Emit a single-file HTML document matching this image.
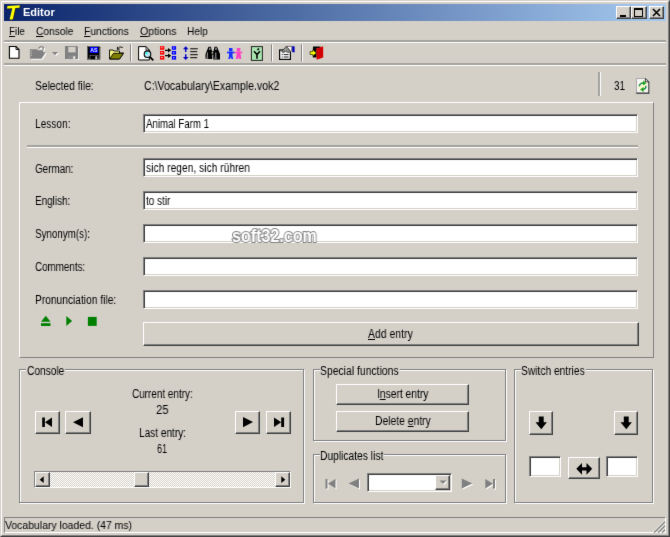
<!DOCTYPE html>
<html><head><meta charset="utf-8"><title>Editor</title>
<style>
*{box-sizing:border-box;margin:0;padding:0}
html,body{width:670px;height:537px;overflow:hidden;background:#d4d0c8}
body{filter:url(#soft);position:relative;font-family:"Liberation Sans",sans-serif;font-size:12px;color:#000}
.a{position:absolute}
.t{position:absolute;white-space:nowrap;transform-origin:0 0;display:inline-block;will-change:transform}
.frame{left:0;top:0;width:670px;height:537px;border:1px solid;border-color:#d4d0c8 #404040 #404040 #d4d0c8}
.frame2{left:1px;top:1px;width:668px;height:535px;border:1px solid;border-color:#fff #808080 #808080 #fff}
.title{left:4px;top:4px;width:662px;height:17px;background:linear-gradient(90deg,#0a246a 0%,#a6caf0 100%)}
.tb{position:absolute;top:6px;height:13px;background:#d4d0c8;border:1px solid;border-color:#fff #404040 #404040 #fff;box-shadow:inset -1px -1px 0 #808080}
.hsep{position:absolute;height:3px;border-top:2px solid #a5a39e;border-bottom:1px solid #fff}
.vsep{position:absolute;width:2px;border-left:1px solid #808080;border-right:1px solid #fff}
.inp{position:absolute;background:#fff;border:1px solid;border-color:#808080 #fff #fff #808080;box-shadow:inset 1px 1px 0 #404040,inset -1px -1px 0 #d4d0c8}
.btn{position:absolute;background:#d4d0c8;border:1px solid;border-color:#fff #404040 #404040 #fff;box-shadow:inset -1px -1px 0 #808080}
.grp{position:absolute;border:1px solid #808080;box-shadow:inset 1px 1px 0 #fff,1px 1px 0 #fff}
.gl{position:absolute;background:#d4d0c8;height:13px}
.panel{position:absolute;border:1px solid;border-color:#fff #808080 #808080 #fff}
u{text-decoration:underline;text-underline-offset:1px}
svg{position:absolute;overflow:visible}
</style></head><body>
<svg style="position:absolute;left:0;top:0" width="0" height="0"><defs><filter id="soft" x="0" y="0" width="100%" height="100%" color-interpolation-filters="sRGB"><feConvolveMatrix order="3" kernelMatrix="0.0052 0.0619 0.0052 0.0619 0.7314 0.0619 0.0052 0.0619 0.0052" divisor="1" edgeMode="duplicate" preserveAlpha="true"/></filter></defs></svg>
<div class="a frame"></div><div class="a frame2"></div>
<div class="a title"></div>
<!-- app icon -->
<svg style="left:0;top:0" width="30" height="22" viewBox="0 0 30 22"><path d="M7.4 5.9 L19.9 5.2 L19.4 7.7 L15.3 8 L12.9 19 Q11.2 20 9.6 19.2 L12.3 8.2 L7 8.6 Z" fill="#2a2a08" transform="translate(0.7,0.6)"/><path d="M7.4 5.9 L19.9 5.2 L19.4 7.7 L15.3 8 L12.9 19 Q11.2 20 9.6 19.2 L12.3 8.2 L7 8.6 Z" fill="#ffff00"/></svg>
<div class="tb" style="left:616px;width:15px"><div class="a" style="left:3px;top:8px;width:6px;height:2px;background:#000"></div></div>
<div class="tb" style="left:631px;width:16px"><div class="a" style="left:2px;top:1px;width:9px;height:9px;border:1px solid #000;border-top-width:2px"></div></div>
<div class="tb" style="left:649px;width:15px"><svg style="left:2px;top:1px" width="9" height="9" viewBox="0 0 9 9"><path d="M1 1 L8 8 M8 1 L1 8" stroke="#000" stroke-width="1.6"/></svg></div>
<div class="hsep" style="left:4px;top:40px;width:662px"></div>
<div class="hsep" style="left:4px;top:63px;width:662px"></div>
<svg style="left:0;top:42px" width="340" height="22" viewBox="0 42 340 22">
<!-- new -->
<path d="M9.4 46.5 H16 L19 49.5 V58.3 H9.4 Z" fill="#fff" stroke="#000" stroke-width="1.1"/>
<path d="M16 46.5 V49.5 H19" fill="none" stroke="#000" stroke-width="0.9"/>
<!-- open disabled -->
<g transform="translate(1,1)" fill="#fff" stroke="#fff"><path d="M30.3 49.5 H37 L38 50.5 H43 V52.5 H45.3 L41.5 58.5 H30.3 Z" stroke-width="0.5"/><path d="M38.5 48.5 Q41 45.5 43.5 47.5 L43 49.5" fill="none" stroke-width="1.2"/></g>
<path d="M30.3 49.5 H37 L38 50.5 H43 V52.5 H45.3 L41.5 58.5 H30.3 Z" fill="#808080" stroke="#808080" stroke-width="0.5"/>
<path d="M38.5 48.5 Q41 45.5 43.5 47.5 L43 49.5" fill="none" stroke="#808080" stroke-width="1.2"/>
<path d="M31.5 51 V57" stroke="#d4d0c8" stroke-width="0.8" stroke-dasharray="1 1"/>
<!-- dropdown arrow -->
<path d="M53 53 H59 L56 56.3 Z" fill="#fff"/>
<path d="M52 52 H58 L55 55.3 Z" fill="#808080"/>
<!-- save disabled -->
<rect x="66" y="47" width="13" height="13" fill="#fff"/>
<path d="M65 46 H77 L78.2 47.2 V59.2 H65 Z" fill="#808080"/>
<rect x="68.3" y="46.8" width="7.3" height="5.6" fill="#d4d0c8"/>
<rect x="68.3" y="55.5" width="7.5" height="3.7" fill="#8a8a8a"/>
<rect x="73.2" y="56.2" width="2" height="3" fill="#e8e6e0"/>
<!-- save as -->
<path d="M87 46 H99 L100.2 47.2 V59.5 H87 Z" fill="#000"/>
<path d="M87.5 46.5 H99 L99.7 47.5 V59 H87.5 Z" fill="none" stroke="#808080" stroke-width="0.8"/>
<rect x="89.8" y="47" width="8.3" height="6" fill="#0000ff"/>
<text x="90.3" y="52.3" font-family="Liberation Sans,sans-serif" font-size="6" font-weight="bold" fill="#e0e8ff" textLength="7.2" lengthAdjust="spacingAndGlyphs">AS</text>
<rect x="90" y="55.3" width="8" height="4.2" fill="#000" stroke="#808080" stroke-width="0.6"/>
<rect x="95.3" y="56.3" width="1.8" height="3" fill="#c0c0c0"/>
<!-- open folder -->
<path d="M109.5 50 H113 L114 51 H119.5 V53 H123.5 L119.5 59 H109.5 Z" fill="#f4f480" stroke="#000" stroke-width="0.9"/>
<path d="M109.7 59 L113.5 53.3 H123.5 L119.5 59 Z" fill="#808000" stroke="#000" stroke-width="0.9"/>
<path d="M117.5 49 Q119.5 45.5 122.8 47.5 M117.3 49.3 L117.5 46.8 M117.3 49.3 L119.8 49" fill="none" stroke="#000" stroke-width="0.9"/>
<!-- sep -->
<rect x="130" y="44.5" width="1" height="17" fill="#808080"/><rect x="131" y="44.5" width="1" height="17" fill="#fff"/>
<!-- preview -->
<path d="M138.6 46.6 H146 L149.3 50 V60 H138.6 Z" fill="#fff" stroke="#000" stroke-width="1"/>
<path d="M146 46.6 V50 H149.3" fill="none" stroke="#000" stroke-width="0.8"/>
<circle cx="147.5" cy="54.2" r="3.3" fill="#b8e8f0" stroke="#000" stroke-width="1.1"/>
<circle cx="146.5" cy="53.2" r="1" fill="#00ffff"/>
<path d="M150 57 L153.3 60.3" stroke="#000" stroke-width="1.8"/>
<!-- compare red/blue -->
<g fill="#ff0000"><rect x="160" y="46.2" width="4.3" height="3.6"/><rect x="160" y="51" width="4.3" height="3.6"/><rect x="160" y="56" width="4.3" height="3.6"/></g>
<g fill="#0000ff"><rect x="171.8" y="46.2" width="4.3" height="3.6"/><rect x="171.8" y="51" width="4.3" height="3.6"/><rect x="171.8" y="56" width="4.3" height="3.6"/></g>
<g fill="#f8c0c0"><rect x="161" y="47.2" width="1.5" height="1"/><rect x="161" y="52" width="1.5" height="1"/><rect x="161" y="57" width="1.5" height="1"/></g>
<g fill="#c0c0f8"><rect x="173" y="47.5" width="1.5" height="1"/><rect x="173" y="52.3" width="1.5" height="1"/><rect x="173" y="57.3" width="1.5" height="1"/></g>
<path d="M165 50.3 H169 M165 55.7 H169" stroke="#000" stroke-width="1.2"/>
<path d="M168 48 L171.3 50.3 L168 52.6 Z M168 53.4 L171.3 55.7 L168 58 Z" fill="#000"/>
<!-- sort arrows -->
<path d="M185.7 46.2 L188.5 49.3 H186.4 V52 H185 V49.3 H183 Z M185.7 60 L188.5 56.9 H186.4 V54.2 H185 V56.9 H183 Z" fill="#0000c0"/>
<path d="M190.2 48.8 H197.8 M190.2 51.7 H197.2 M190.2 54.7 H197.8 M190.2 57.7 H197.2" stroke="#000" stroke-width="1"/>
<!-- binoculars -->
<g fill="#000"><path d="M208.5 46.8 H211 L211.5 49.5 L212.3 51.5 V59 H205.5 V54 Z"/><path d="M214.5 46.8 H217 L220 54 V59.6 H213.3 V51.5 L214 49.5 Z"/><rect x="211" y="51.5" width="3.5" height="3"/></g>
<g fill="#b0b0b0"><rect x="206.8" y="52.5" width="1" height="5"/><rect x="215.3" y="52.5" width="1" height="5"/><rect x="209.2" y="47.6" width="1.2" height="2.4"/><rect x="215.4" y="47.6" width="1.2" height="2.4"/><rect x="211.6" y="52" width="1.6" height="1.6"/><rect x="205.8" y="57.6" width="2.4" height="1"/><rect x="214.4" y="57.6" width="2.4" height="1"/></g>
<!-- people -->
<g fill="#1830ff"><rect x="229" y="48" width="3.5" height="3"/><rect x="227" y="51.7" width="7.6" height="1.6"/><rect x="229" y="51.5" width="3.5" height="4.5"/><path d="M229 56 H232.5 L233.3 59 H231.5 L230.8 57 L230 59 H228.2 Z"/></g>
<g fill="#ff40c0"><rect x="236.8" y="48" width="3.5" height="3"/><rect x="234.6" y="51.7" width="7.7" height="1.6"/><rect x="236.8" y="51.5" width="3.5" height="3"/><path d="M236.6 54 H240.5 L241.3 59 H239.3 L238.6 57.3 L237.9 59 H235.9 Z"/></g>
<!-- Y -->
<rect x="251.4" y="46.6" width="11" height="13.8" fill="#a8e4b0" stroke="#202020" stroke-width="1"/>
<path d="M254 51.2 L257 54.5 L260 51.2 M257 54.3 V58.7 M257.4 50 L259 48.5" fill="none" stroke="#000" stroke-width="1.6"/>
<!-- sep -->
<rect x="271" y="44.5" width="1" height="17" fill="#808080"/><rect x="272" y="44.5" width="1" height="17" fill="#fff"/>
<!-- properties -->
<rect x="279.6" y="50" width="10.8" height="9.4" fill="#fff" stroke="#000" stroke-width="1.2"/>
<path d="M281.6 54.6 H282.7 M283.7 54.6 H288.6 M281.6 57 H282.7 M283.7 57 H288.6" stroke="#000" stroke-width="0.9"/>
<path d="M286.3 46.4 H291.6 V50.4 L289.2 52.4 Z" fill="#fff" stroke="#303030" stroke-width="0.6"/>
<path d="M281.6 51.6 L286.4 46.2 L290 50.2 L288.4 52.6 L285.2 51.4 L283.6 52.8 Z" fill="#787878" stroke="#101010" stroke-width="0.6"/>
<path d="M283.2 51 L286.6 47.4 M285 51.2 L287.8 48.6 M286.8 51.8 L288.8 49.8" stroke="#e0e0e0" stroke-width="0.5"/>
<path d="M292.2 46 L294.6 46.4 V52.6 L292.2 52 Z" fill="#0000b8"/>
<!-- sep -->
<rect x="301" y="44.5" width="1" height="17" fill="#808080"/><rect x="302" y="44.5" width="1" height="17" fill="#fff"/>
<!-- exit -->
<path d="M313 46.5 H320.5 V48.5 H316.6 V57.4 H313 Z" fill="#000"/>
<path d="M316.4 48.6 L323.2 46.3 V57.4 L316.6 59.8 Z" fill="#d80000"/>
<path d="M317.5 50 L322 48.5 M317.5 53 L322 51.5 M317.5 56 L322 54.5" stroke="#a00000" stroke-width="0.8" stroke-dasharray="1 1"/>
<path d="M310 51.6 H312.8 V49.6 L316.4 53 L312.8 56.3 V54.4 H310 Z" fill="#ffff00" stroke="#000" stroke-width="0.6"/>
</svg>

<div class="a" style="left:598px;top:72px;height:24px;width:3px;border-left:2px solid #a5a39e;border-right:1px solid #fff"></div>
<!-- main panel -->
<div class="panel" style="left:19px;top:102px;width:635px;height:256px"></div>
<div class="inp" style="left:143px;top:114px;width:495px;height:19px"></div>
<div class="hsep" style="left:27px;top:145px;width:611px"></div>
<div class="inp" style="left:143px;top:158px;width:495px;height:19px"></div>
<div class="inp" style="left:143px;top:191px;width:495px;height:19px"></div>
<div class="inp" style="left:143px;top:224px;width:495px;height:19px"></div>
<div class="inp" style="left:143px;top:257px;width:495px;height:19px"></div>
<div class="inp" style="left:143px;top:290px;width:495px;height:19px"></div>
<div class="btn" style="left:143px;top:322px;width:496px;height:24px"></div>
<!-- green media icons -->
<svg style="left:40px;top:315px" width="60" height="12" viewBox="40 315 60 12"><g fill="#008000"><path d="M41 321.8 L45.8 315.8 L50.5 321.8 Z"/><rect x="41" y="323.2" width="9.5" height="2.8"/><path d="M66.3 315.9 L72.1 320.9 L66.3 325.9 Z"/><rect x="87.9" y="316.9" width="8.8" height="9"/></g></svg>
<!-- console -->
<div class="grp" style="left:19px;top:369px;width:285px;height:134px"></div>
<div class="gl" style="left:26px;top:364px;width:39px"></div>
<div class="btn" style="left:35px;top:411px;width:25px;height:23px"></div>
<div class="btn" style="left:65px;top:411px;width:26px;height:23px"></div>
<div class="btn" style="left:235px;top:411px;width:25px;height:23px"></div>
<div class="btn" style="left:266px;top:411px;width:25px;height:23px"></div>
<!-- special -->
<div class="grp" style="left:313px;top:369px;width:193px;height:72px"></div>
<div class="gl" style="left:320px;top:364px;width:80px"></div>
<div class="btn" style="left:336px;top:384px;width:133px;height:21px"></div>
<div class="btn" style="left:336px;top:411px;width:133px;height:21px"></div>
<div class="grp" style="left:313px;top:454px;width:193px;height:49px"></div>
<div class="gl" style="left:320px;top:449px;width:64px"></div>
<div class="inp" style="left:367px;top:473px;width:85px;height:19px"></div>
<!-- switch -->
<div class="grp" style="left:514px;top:369px;width:139px;height:134px"></div>
<div class="gl" style="left:521px;top:364px;width:65px"></div>
<div class="btn" style="left:529px;top:411px;width:24px;height:24px"></div>
<div class="btn" style="left:614px;top:411px;width:24px;height:24px"></div>
<div class="inp" style="left:529px;top:456px;width:32px;height:21px"></div>
<div class="btn" style="left:568px;top:457px;width:32px;height:22px"></div>
<div class="inp" style="left:606px;top:456px;width:32px;height:21px"></div>
<!-- status -->
<div class="a" style="left:4px;top:517px;width:662px;height:16px;border:1px solid;border-color:#808080 #fff #fff #808080"></div>

<!-- console button glyphs -->
<svg style="left:0;top:405px" width="670" height="100" viewBox="0 405 670 100">
<g fill="#000">
<rect x="42.2" y="417.5" width="2.7" height="9.5"/><path d="M52 417.5 V427 L45 422.25 Z"/>
<path d="M83 417.3 V427.2 L73 422.25 Z"/>
<path d="M243 417 V427.2 L253 422.1 Z"/>
<path d="M274 417.5 V427 L281.2 422.25 Z"/><rect x="281.2" y="417.5" width="2.9" height="9.5"/>
<!-- switch arrows -->
<path d="M538.8 416.5 H543.7 V422.3 H546.9 L541.25 429.2 L535.5 422.3 H538.8 Z"/>
<path d="M623.8 416.5 H628.7 V422.3 H631.9 L626.25 429.2 L620.5 422.3 H623.8 Z"/>
<path d="M576.3 468.8 L582 463 V467.3 H586.5 V463 L592.2 468.8 L586.5 474.7 V470.4 H582 V474.7 Z"/>
</g>
<!-- disabled nav -->
<g id="dn">
<g fill="#fff" transform="translate(1,1)"><rect x="325.5" y="479" width="2" height="9.6"/><path d="M335.5 479 V488.6 L328 483.8 Z"/><path d="M359 478.6 V488.4 L348.5 483.5 Z"/><path d="M461.8 478.6 V488.4 L472.3 483.5 Z"/><path d="M485.3 479 V488.6 L493 483.8 Z"/><rect x="493" y="479" width="2" height="9.6"/></g>
<g fill="#808080"><rect x="325.5" y="479" width="2" height="9.6"/><path d="M335.5 479 V488.6 L328 483.8 Z"/><path d="M359 478.6 V488.4 L348.5 483.5 Z"/><path d="M461.8 478.6 V488.4 L472.3 483.5 Z"/><path d="M485.3 479 V488.6 L493 483.8 Z"/><rect x="493" y="479" width="2" height="9.6"/></g>
</g>
</svg>
<!-- scrollbar -->
<div class="a" style="left:34px;top:471px;width:257px;height:17px;border:1px solid;border-color:#808080 #fff #fff #808080;background:repeating-conic-gradient(#fff 0 25%,#d4d0c8 0 50%) 0 0/2px 2px"></div>
<div class="btn" style="left:35px;top:472px;width:15px;height:15px"></div>
<div class="btn" style="left:275px;top:472px;width:15px;height:15px"></div>
<div class="btn" style="left:134px;top:472px;width:15px;height:15px"></div>
<svg style="left:34px;top:471px" width="257" height="17" viewBox="34 471 257 17"><path d="M43.7 476.3 V483 L39.7 479.65 Z M281.3 476.3 V483 L285.3 479.65 Z" fill="#000"/></svg>
<!-- combo button -->
<div class="btn" style="left:435px;top:475px;width:15px;height:15px"></div>
<svg style="left:435px;top:475px" width="15" height="15" viewBox="435 475 15 15"><path d="M440.5 481.5 H447.5 L444 485 Z" fill="#fff"/><path d="M439.5 480.5 H446.5 L443 484 Z" fill="#808080"/></svg>
<!-- refresh icon -->
<svg style="left:634px;top:76px" width="18" height="20" viewBox="634 76 18 20">
<path d="M636.5 78.5 H645.6 L648.8 81.6 V93.2 H636.5 Z" fill="#f6f6f4" stroke="#a4a4a4" stroke-width="0.9"/>
<path d="M636.2 93.2 H649.2" stroke="#505050" stroke-width="1.5"/>
<path d="M648.8 81.6 V93.6" stroke="#404040" stroke-width="1"/>
<path d="M645.4 78.6 V81.8 H648.8 Z" fill="#fff" stroke="#202020" stroke-width="0.9"/>
<circle cx="642.7" cy="86.2" r="4.6" fill="#ffffb0" opacity="0.55"/>
<path d="M639.4 86.4 Q639.2 83.2 643.6 83.1" fill="none" stroke="#1c8a60" stroke-width="1.5"/>
<path d="M643 80.4 L646.5 83.2 L643 85.6 Z" fill="#22a418"/>
<path d="M645.9 85.8 Q646.2 89.2 642.6 89.4" fill="none" stroke="#1c8a60" stroke-width="1.5"/>
<path d="M643.6 86.9 L640 89.5 L643.6 92 Z" fill="#22a418"/>
</svg>
<!-- resize grip -->
<svg style="left:652px;top:519px" width="14" height="14" viewBox="652 519 14 14"><path d="M654 532.5 L665 521.5 M658 532.5 L665 525.5 M662 532.5 L665 529.5" stroke="#808080" stroke-width="1.6"/><path d="M653 532.3 L664.6 520.7 M657 532.3 L664.6 524.7 M661 532.3 L664.6 528.7" stroke="#fff" stroke-width="0.8"/></svg>
<!-- watermark -->
<div class="t" id="title" style="left:22.5px;top:6.3px;font-size:10.5px;line-height:12.5px;height:12.5px;transform:scaleX(1.0480);color:#fff;font-weight:bold">Editor</div>
<div class="t" id="m1" style="left:8.8px;top:24.6px;font-size:11px;line-height:13px;height:13px;transform:scaleX(0.8958);"><u>F</u>ile</div>
<div class="t" id="m2" style="left:35.8px;top:24.6px;font-size:11px;line-height:13px;height:13px;transform:scaleX(0.9263);"><u>C</u>onsole</div>
<div class="t" id="m3" style="left:84.0px;top:24.6px;font-size:11px;line-height:13px;height:13px;transform:scaleX(0.9388);"><u>F</u>unctions</div>
<div class="t" id="m4" style="left:139.8px;top:24.6px;font-size:11px;line-height:13px;height:13px;transform:scaleX(0.9599);"><u>O</u>ptions</div>
<div class="t" id="m5" style="left:187.0px;top:24.6px;font-size:11px;line-height:13px;height:13px;transform:scaleX(0.9193);">Help</div>
<div class="t" id="sel" style="left:34.8px;top:78.5px;font-size:12px;line-height:14px;height:14px;transform:scaleX(0.8542);">Selected file:</div>
<div class="t" id="path" style="left:143.5px;top:78.5px;font-size:12px;line-height:14px;height:14px;transform:scaleX(0.8819);">C:\Vocabulary\Example.vok2</div>
<div class="t" id="n31" style="left:614.1px;top:78.8px;font-size:12px;line-height:14px;height:14px;transform:scaleX(0.8234);">31</div>
<div class="t" id="l1" style="left:34.8px;top:117.1px;font-size:12px;line-height:14px;height:14px;transform:scaleX(0.8446);">Lesson:</div>
<div class="t" id="v1" style="left:145.7px;top:116.8px;font-size:12px;line-height:14px;height:14px;transform:scaleX(0.8087);">Animal Farm 1</div>
<div class="t" id="l2" style="left:34.8px;top:161.8px;font-size:12px;line-height:14px;height:14px;transform:scaleX(0.8225);">German:</div>
<div class="t" id="v2" style="left:145.9px;top:161.2px;font-size:12px;line-height:14px;height:14px;transform:scaleX(0.8558);">sich regen, sich rühren</div>
<div class="t" id="l3" style="left:34.8px;top:194.3px;font-size:12px;line-height:14px;height:14px;transform:scaleX(0.8266);">English:</div>
<div class="t" id="v3" style="left:145.9px;top:193.8px;font-size:12px;line-height:14px;height:14px;transform:scaleX(0.8315);">to stir</div>
<div class="t" id="l4" style="left:34.8px;top:227.2px;font-size:12px;line-height:14px;height:14px;transform:scaleX(0.8165);">Synonym(s):</div>
<div class="t" id="l5" style="left:34.8px;top:259.8px;font-size:12px;line-height:14px;height:14px;transform:scaleX(0.8181);">Comments:</div>
<div class="t" id="l6" style="left:34.8px;top:292.5px;font-size:12px;line-height:14px;height:14px;transform:scaleX(0.8512);">Pronunciation file:</div>
<div class="t" id="add" style="left:368.2px;top:326.8px;font-size:12px;line-height:14px;height:14px;transform:scaleX(0.8701);"><u>A</u>dd entry</div>
<div class="t" id="g1" style="left:27.2px;top:363.8px;font-size:12px;line-height:14px;height:14px;transform:scaleX(0.8471);">Console</div>
<div class="t" id="c1" style="left:132.2px;top:386.8px;font-size:12px;line-height:14px;height:14px;transform:scaleX(0.8274);">Current entry:</div>
<div class="t" id="c2" style="left:156.4px;top:403.3px;font-size:12px;line-height:14px;height:14px;transform:scaleX(0.9357);">25</div>
<div class="t" id="c3" style="left:139.3px;top:426.1px;font-size:12px;line-height:14px;height:14px;transform:scaleX(0.8388);">Last entry:</div>
<div class="t" id="c4" style="left:156.5px;top:441.6px;font-size:12px;line-height:14px;height:14px;transform:scaleX(0.7485);">61</div>
<div class="t" id="g2" style="left:320.4px;top:363.8px;font-size:12px;line-height:14px;height:14px;transform:scaleX(0.8663);">Special functions</div>
<div class="t" id="b1" style="left:376.7px;top:386.8px;font-size:12px;line-height:14px;height:14px;transform:scaleX(0.8560);">I<u>n</u>sert entry</div>
<div class="t" id="b2" style="left:374.6px;top:413.6px;font-size:12px;line-height:14px;height:14px;transform:scaleX(0.8604);">Delete <u>e</u>ntry</div>
<div class="t" id="g3" style="left:320.4px;top:448.8px;font-size:12px;line-height:14px;height:14px;transform:scaleX(0.8550);">Duplicates list</div>
<div class="t" id="g4" style="left:521.4px;top:363.8px;font-size:12px;line-height:14px;height:14px;transform:scaleX(0.8527);">Switch entries</div>
<div class="t" id="wm" style="left:232.3px;top:226.8px;font-size:17.5px;line-height:19.5px;height:19.5px;transform:scaleX(0.9178);font-weight:bold;color:#fff;-webkit-text-stroke:2px #858585;paint-order:stroke fill">soft32.com</div>
<div class="t" id="st" style="left:5.1px;top:518.7px;font-size:11px;line-height:13px;height:13px;transform:scaleX(0.9483);">Vocabulary loaded. (47 ms)</div>
</body></html>
